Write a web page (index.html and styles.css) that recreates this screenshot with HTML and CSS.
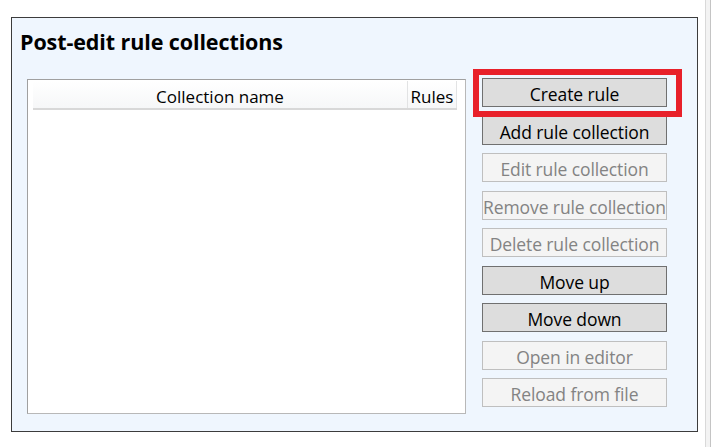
FILE: index.html
```html
<!DOCTYPE html>
<html>
<head>
<meta charset="utf-8">
<link rel="stylesheet" href="styles.css">
</head>
<body>
<div class="page">
  <div class="panel">
    <h1 class="title">Post-edit rule collections</h1>
    <div class="content">
      <div class="list">
        <div class="list-header">
          <div class="col col-name">Collection name</div>
          <div class="col col-rules">Rules</div>
        </div>
      </div>
      <div class="buttons">
        <div class="btn-wrap">
          <button class="btn">Create rule</button>
          <div class="highlight"></div>
        </div>
        <button class="btn">Add rule collection</button>
        <button class="btn disabled">Edit rule collection</button>
        <button class="btn disabled">Remove rule collection</button>
        <button class="btn disabled">Delete rule collection</button>
        <button class="btn">Move up</button>
        <button class="btn">Move down</button>
        <button class="btn disabled">Open in editor</button>
        <button class="btn disabled">Reload from file</button>
      </div>
    </div>
  </div>
  <div class="scroll-edge"></div>
</div>
</body>
</html>
```
FILE: styles.css
```css
html, body {
  margin: 0;
  padding: 0;
  background: #ffffff;
  font-family: "Open Sans", "Noto Sans", sans-serif;
  width: 711px;
  height: 447px;
  overflow: hidden;
}

.page {
  display: flex;
  height: 447px;
}

.panel {
  margin: 17px 0 0 11px;
  width: 687px;
  height: 415px;
  box-sizing: border-box;
  border: 1px solid #3c3c3c;
  background: #eff6fe;
  display: flex;
  flex-direction: column;
}

.title {
  margin: 0;
  padding: 10px 0 0 8px;
  height: 49px;
  box-sizing: border-box;
  font-size: 21.5px;
  font-weight: 700;
  line-height: 28px;
  color: #000;
  letter-spacing: -0.1px;
}

.content {
  display: flex;
  align-items: flex-start;
  padding-left: 15px;
  margin-top: 11px;
}

.list {
  margin-top: 1px;
  width: 439px;
  height: 335px;
  box-sizing: border-box;
  border: 1px solid #a0a0a0;
  border-right-color: #b8b8b8;
  border-bottom-color: #b8b8b8;
  background: #ffffff;
  padding: 1px 8px 0 5px;
}

.list-header {
  display: flex;
  height: 29px;
  box-sizing: border-box;
  background: linear-gradient(#ffffff, #f6f7f8);
  border-bottom: 2px solid #d8d8d8;
}

.col {
  font-size: 17px;
  line-height: 31px;
  color: #000;
  box-sizing: border-box;
}

.col-name {
  width: 375px;
  text-align: center;
  border-right: 1px solid #e2e3e4;
}

.col-rules {
  width: 49px;
  text-align: center;
  border-right: 1px solid #e2e3e4;
}

.buttons {
  margin-left: 16px;
  display: flex;
  flex-direction: column;
  gap: 8.5px;
}

.btn-wrap {
  position: relative;
  display: flex;
}

.btn {
  width: 185px;
  height: 29px;
  box-sizing: border-box;
  margin: 0;
  padding: 0;
  border: 1px solid #707070;
  background: #dddddd;
  font-family: "Open Sans", "Noto Sans", sans-serif;
  font-size: 17.5px;
  line-height: 30px;
  color: #000;
  text-align: center;
  white-space: nowrap;
  letter-spacing: -0.1px;
  overflow: visible;
}

.btn.disabled {
  border-color: #bfbfbf;
  background: #f4f4f4;
  color: #838383;
}

.highlight {
  position: absolute;
  left: -9px;
  top: -9px;
  right: -15px;
  bottom: -10px;
  border: 6px solid #e8202a;
  pointer-events: none;
}

.scroll-edge {
  margin-left: 7px;
  width: 6px;
  height: 447px;
  box-sizing: border-box;
  border-left: 1px solid #d9d9d9;
  border-right: 1px solid #c4c4c4;
  background: #f3f3f3;
}
```
